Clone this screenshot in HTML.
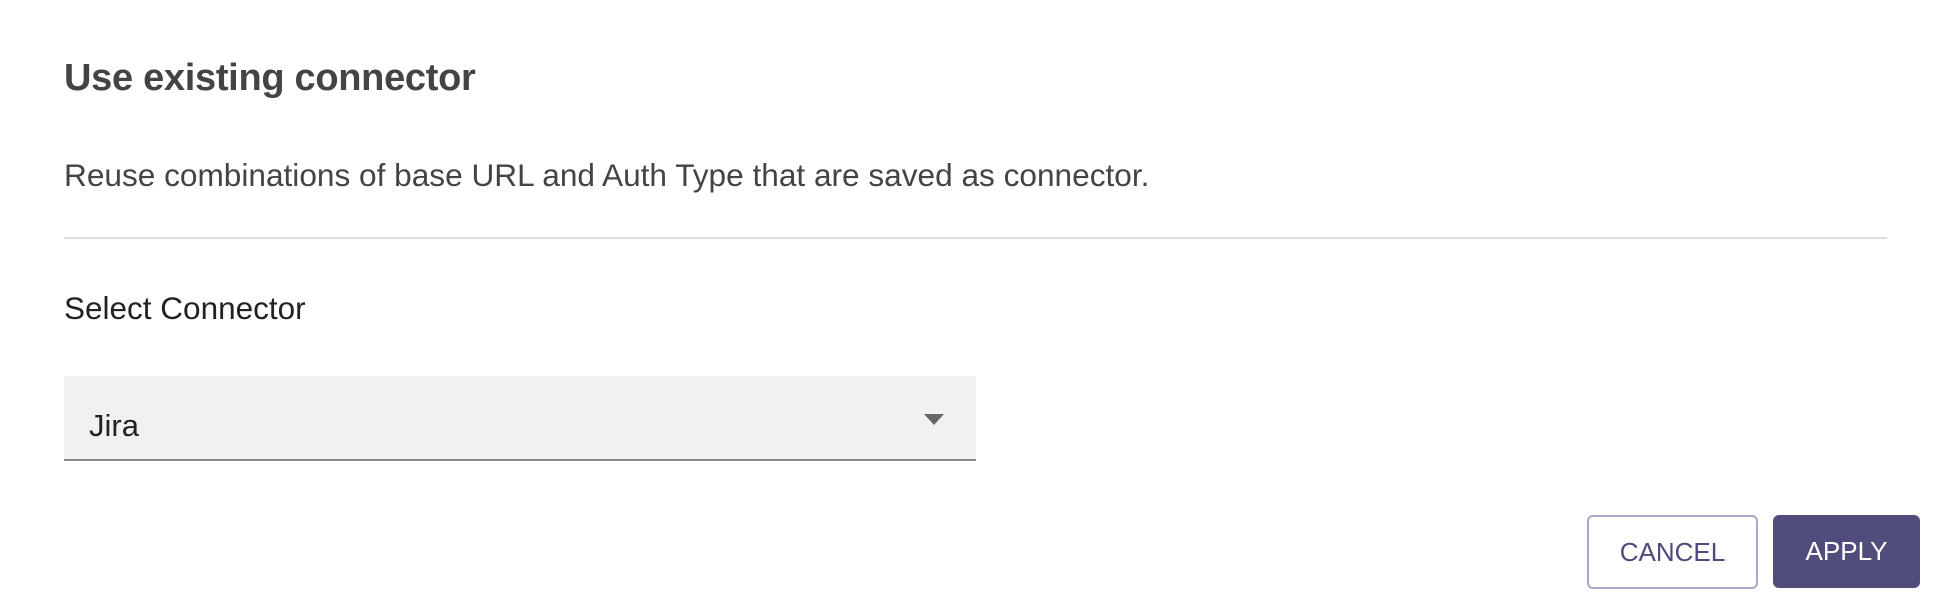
<!DOCTYPE html>
<html><head><meta charset="utf-8"><style>
html,body{margin:0;padding:0;width:1934px;height:616px;background:#fff;overflow:hidden;font-family:"Liberation Sans",sans-serif;}
.a{position:absolute;white-space:nowrap;}
</style></head><body>
<div class="a" style="left:64px;top:57px;font-size:38px;font-weight:bold;color:#444;letter-spacing:-0.3px">Use existing connector</div>
<div class="a" style="left:64px;top:157px;font-size:31.6px;color:#444">Reuse combinations of base URL and Auth Type that are saved as connector.</div>
<div class="a" style="left:64px;top:237px;width:1823px;height:2px;background:#ddd"></div>
<div class="a" style="left:64px;top:290px;font-size:31.5px;color:#222">Select Connector</div>
<div class="a" style="left:64px;top:376px;width:912px;height:83px;background:#f2f1ef;border-bottom:2px solid #888"></div>
<div class="a" style="left:89px;top:408px;font-size:31px;color:#222">Jira</div>
<svg class="a" style="left:924px;top:414px" width="20" height="12"><path d="M0 0H20L10 11Z" fill="#666"/></svg>
<div class="a" style="left:1587px;top:515px;width:167px;height:70px;border:2px solid #aaa8c2;border-radius:6px;box-sizing:content-box;color:#4e4a7a;font-size:26px;text-align:center;line-height:70px">CANCEL</div>
<div class="a" style="left:1773px;top:515px;width:147px;height:73px;background:#504c7c;border-radius:6px;color:#fff;font-size:26px;text-align:center;line-height:73px">APPLY</div>
</body></html>
